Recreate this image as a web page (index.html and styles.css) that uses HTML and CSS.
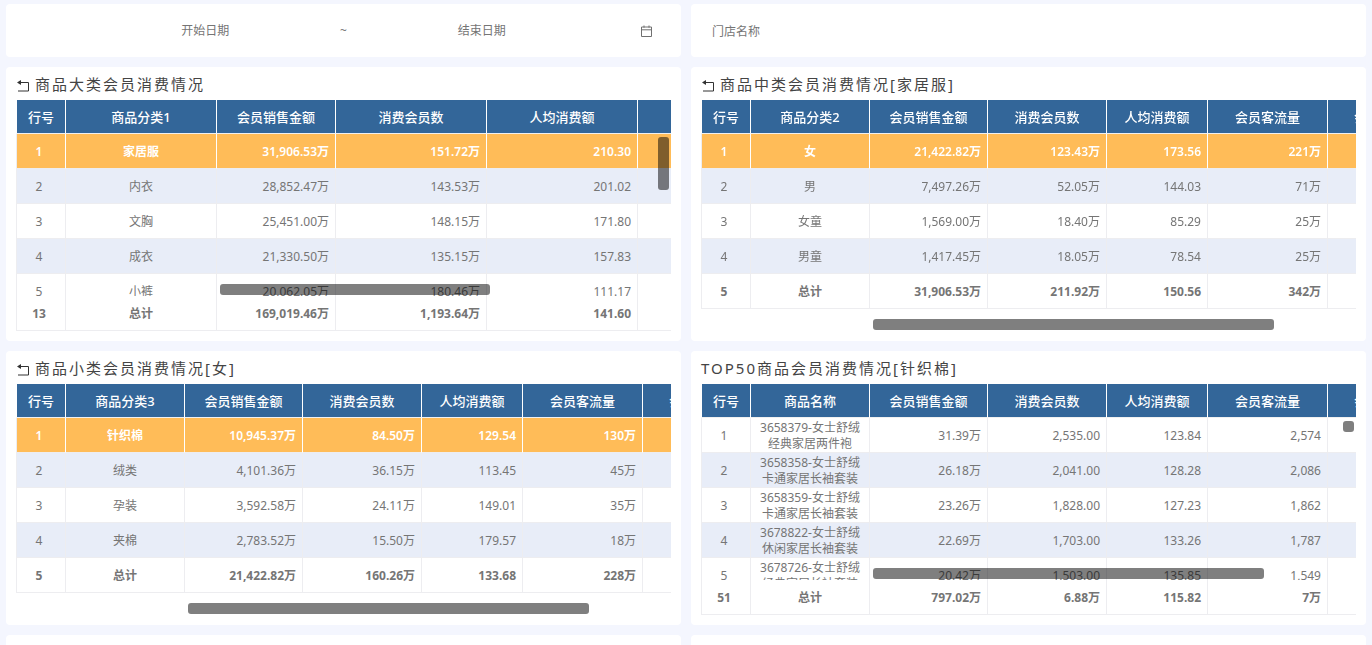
FILE: index.html
```html
<!DOCTYPE html>
<html lang="zh-CN">
<head>
<meta charset="utf-8">
<title>商品会员消费情况</title>
<link rel="stylesheet" href="styles.css">
</head>
<body>
<main class="board">
  <section class="card filter date-range">
    <input class="field field-center" type="text" placeholder="开始日期" aria-label="开始日期">
    <span class="tilde">~</span>
    <input class="field field-center" type="text" placeholder="结束日期" aria-label="结束日期">
    <svg class="calendar" viewBox="0 0 12 12" aria-hidden="true"><path d="M.5 2h10v9.500H.5zM.5 4.800h10M3 .5v2.200M8 .5v2.200"/></svg>
  </section>
  <section class="card filter store">
    <input class="field" type="text" placeholder="门店名称" aria-label="门店名称">
  </section>

  <section class="card panel">
    <h2 class="title"><button class="back" type="button" aria-label="返回"><svg viewBox="0 0 13 12"><path d="M1 2.500h10.500v8.500H1"/><path class="tip" d="M0 2.500L4 0v5z"/></svg></button>商品大类会员消费情况</h2>
    <div class="frame">
      <div class="viewport">
        <table class="grid grid-wide">
          <colgroup><col class="c-no"><col class="c-xl"><col class="c-m"><col class="c-xl"><col class="c-xl"><col class="c-xl"></colgroup>
          <thead><tr><th>行号</th><th>商品分类1</th><th>会员销售金额</th><th>消费会员数</th><th>人均消费额</th><th></th></tr></thead>
          <tbody>
            <tr class="selected"><td>1</td><td>家居服</td><td>31,906.53万</td><td>151.72万</td><td>210.30</td><td></td></tr>
            <tr><td>2</td><td>内衣</td><td>28,852.47万</td><td>143.53万</td><td>201.02</td><td></td></tr>
            <tr><td>3</td><td>文胸</td><td>25,451.00万</td><td>148.15万</td><td>171.80</td><td></td></tr>
            <tr><td>4</td><td>成衣</td><td>21,330.50万</td><td>135.15万</td><td>157.83</td><td></td></tr>
            <tr><td>5</td><td>小裤</td><td>20,062.05万</td><td>180.46万</td><td>111.17</td><td></td></tr>
          </tbody>
          <tfoot><tr><td>13</td><td>总计</td><td>169,019.46万</td><td>1,193.64万</td><td>141.60</td><td></td></tr></tfoot>
        </table>
      </div>
      <div class="thumb thumb-x over-rows thumb-first"></div>
      <div class="thumb thumb-y thumb-tall"></div>
    </div>
  </section>

  <section class="card panel">
    <h2 class="title"><button class="back" type="button" aria-label="返回"><svg viewBox="0 0 13 12"><path d="M1 2.500h10.500v8.500H1"/><path class="tip" d="M0 2.500L4 0v5z"/></svg></button>商品中类会员消费情况[家居服]</h2>
    <div class="frame">
      <div class="viewport">
        <table class="grid grid-normal">
          <colgroup><col class="c-no"><col class="c-m"><col class="c-n"><col class="c-m"><col class="c-s"><col class="c-l"><col class="c-n"></colgroup>
          <thead><tr><th>行号</th><th>商品分类2</th><th>会员销售金额</th><th>消费会员数</th><th>人均消费额</th><th>会员客流量</th><th>会员客单价</th></tr></thead>
          <tbody>
            <tr class="selected"><td>1</td><td>女</td><td>21,422.82万</td><td>123.43万</td><td>173.56</td><td>221万</td><td></td></tr>
            <tr><td>2</td><td>男</td><td>7,497.26万</td><td>52.05万</td><td>144.03</td><td>71万</td><td></td></tr>
            <tr><td>3</td><td>女童</td><td>1,569.00万</td><td>18.40万</td><td>85.29</td><td>25万</td><td></td></tr>
            <tr><td>4</td><td>男童</td><td>1,417.45万</td><td>18.05万</td><td>78.54</td><td>25万</td><td></td></tr>
          </tbody>
          <tfoot><tr><td>5</td><td>总计</td><td>31,906.53万</td><td>211.92万</td><td>150.56</td><td>342万</td><td></td></tr></tfoot>
        </table>
      </div>
      <div class="thumb thumb-x"></div>
    </div>
  </section>

  <section class="card panel">
    <h2 class="title"><button class="back" type="button" aria-label="返回"><svg viewBox="0 0 13 12"><path d="M1 2.500h10.500v8.500H1"/><path class="tip" d="M0 2.500L4 0v5z"/></svg></button>商品小类会员消费情况[女]</h2>
    <div class="frame">
      <div class="viewport">
        <table class="grid grid-normal">
          <colgroup><col class="c-no"><col class="c-m"><col class="c-n"><col class="c-m"><col class="c-s"><col class="c-l"><col class="c-n"></colgroup>
          <thead><tr><th>行号</th><th>商品分类3</th><th>会员销售金额</th><th>消费会员数</th><th>人均消费额</th><th>会员客流量</th><th>会员客单价</th></tr></thead>
          <tbody>
            <tr class="selected"><td>1</td><td>针织棉</td><td>10,945.37万</td><td>84.50万</td><td>129.54</td><td>130万</td><td></td></tr>
            <tr><td>2</td><td>绒类</td><td>4,101.36万</td><td>36.15万</td><td>113.45</td><td>45万</td><td></td></tr>
            <tr><td>3</td><td>孕装</td><td>3,592.58万</td><td>24.11万</td><td>149.01</td><td>35万</td><td></td></tr>
            <tr><td>4</td><td>夹棉</td><td>2,783.52万</td><td>15.50万</td><td>179.57</td><td>18万</td><td></td></tr>
          </tbody>
          <tfoot><tr><td>5</td><td>总计</td><td>21,422.82万</td><td>160.26万</td><td>133.68</td><td>228万</td><td></td></tr></tfoot>
        </table>
      </div>
      <div class="thumb thumb-x"></div>
    </div>
  </section>

  <section class="card panel">
    <h2 class="title">TOP50商品会员消费情况[针织棉]</h2>
    <div class="frame">
      <div class="viewport">
        <table class="grid grid-normal">
          <colgroup><col class="c-no"><col class="c-m"><col class="c-n"><col class="c-m"><col class="c-s"><col class="c-l"><col class="c-n"></colgroup>
          <thead><tr><th>行号</th><th>商品名称</th><th>会员销售金额</th><th>消费会员数</th><th>人均消费额</th><th>会员客流量</th><th>会员客单价</th></tr></thead>
          <tbody>
            <tr><td>1</td><td>3658379-女士舒绒<br>经典家居两件袍</td><td>31.39万</td><td>2,535.00</td><td>123.84</td><td>2,574</td><td></td></tr>
            <tr><td>2</td><td>3658358-女士舒绒<br>卡通家居长袖套装</td><td>26.18万</td><td>2,041.00</td><td>128.28</td><td>2,086</td><td></td></tr>
            <tr><td>3</td><td>3658359-女士舒绒<br>卡通家居长袖套装</td><td>23.26万</td><td>1,828.00</td><td>127.23</td><td>1,862</td><td></td></tr>
            <tr><td>4</td><td>3678822-女士舒绒<br>休闲家居长袖套装</td><td>22.69万</td><td>1,703.00</td><td>133.26</td><td>1,787</td><td></td></tr>
            <tr><td>5</td><td>3678726-女士舒绒<br>经典家居长袖套装</td><td>20.42万</td><td>1,503.00</td><td>135.85</td><td>1,549</td><td></td></tr>
          </tbody>
          <tfoot><tr><td>51</td><td>总计</td><td>797.02万</td><td>6.88万</td><td>115.82</td><td>7万</td><td></td></tr></tfoot>
        </table>
      </div>
      <div class="thumb thumb-x over-rows thumb-top50"></div>
      <div class="thumb thumb-y"></div>
    </div>
  </section>

  <section class="card"></section>
  <section class="card"></section>
</main>
</body>
</html>
```
FILE: styles.css
```css
* { box-sizing: border-box; }

body {
  margin: 0;
  background: #f4f6fe;
  color: #757575;
  font: 12px/16px "Noto Sans", "Noto Sans CJK SC", sans-serif;
}

.board {
  display: grid;
  grid-template-columns: repeat(2, minmax(0, 1fr));
  grid-template-rows: 53px auto auto 274px;
  gap: 10px;
  height: 100vh;
  padding: 4px 6px 0;
  overflow: hidden;
}

.card {
  background: #fff;
  border-radius: 4px;
}

/* Filters */
.filter { align-items: center; }

.date-range {
  display: grid;
  grid-template-columns: minmax(0, 1fr) 10px minmax(0, 1fr) 38px;
  padding: 0 28px 0 66px;
}

.store {
  display: flex;
  padding: 2px 21px 0;
}

.field {
  width: 100%;
  padding: 0;
  border: 0;
  outline: 0;
  background: transparent;
  color: #666;
  font: inherit;
}

.field::placeholder { color: #757575; opacity: 1; }
.field-center { text-align: center; }
.tilde { text-align: center; }

.calendar {
  justify-self: end;
  width: 12px;
  height: 12px;
  fill: none;
  stroke: #707070;
}

/* Panels */
.panel { padding: 0 10px 10px; }

.title {
  display: flex;
  align-items: center;
  gap: 5px;
  height: 33px;
  margin: 0;
  color: #444;
  font-size: 15px;
  font-weight: 400;
  line-height: 20px;
  letter-spacing: 2px;
}

.back {
  display: flex;
  padding: 4px 0 0 1px;
  border: 0;
  background: none;
  cursor: pointer;
}

.back svg {
  width: 13px;
  height: 12px;
  fill: none;
  stroke: #333;
}

.back .tip { fill: #333; stroke: none; }

.frame { position: relative; }

.viewport {
  height: 231px;
  overflow: hidden;
}

/* Tables */
.grid {
  table-layout: fixed;
  border-collapse: separate;
  border-spacing: 0;
}

.grid-wide { width: 773px; }
.grid-normal { width: 745px; }
.c-no { width: 50px; }
.c-s { width: 101px; }
.c-n { width: 118px; }
.c-m { width: 119px; }
.c-l { width: 120px; }
.c-xl { width: 151px; }

.grid th {
  height: 34px;
  padding: 0;
  border-right: 1px solid #fff;
  border-bottom: 1px solid #f0f0f0;
  background: #336699;
  color: #fff;
  font-size: 13px;
  font-weight: 500;
}

.grid td {
  height: 35px;
  padding: 1px 6px 0;
  border-right: 1px solid #ededf0;
  border-bottom: 1px solid #ededf0;
  background: #fff;
  text-align: right;
}

.grid td:nth-child(-n+2) {
  padding: 1px 0 0;
  text-align: center;
}

.grid th:first-child { border-left: 1px solid #fff; }
.grid td:first-child { padding-right: 4px; border-left: 1px solid #ededf0; }
.grid tbody tr:nth-child(even) td { background: #e8edf8; }

.grid .selected td {
  border-right-color: #fff;
  background: #ffbc58;
  color: #fff;
  font-weight: 600;
}

.grid tfoot {
  position: sticky;
  bottom: 0;
}

.grid tfoot td { font-weight: 700; }

/* Overlay scrollbar thumbs */
.thumb {
  position: absolute;
  border-radius: 3px;
  background: rgba(0, 0, 0, 0.5);
}

.thumb-x {
  left: 172px;
  bottom: 1px;
  width: 401px;
  height: 11px;
}

.thumb-y {
  top: 37px;
  right: 2px;
  width: 11px;
  height: 11px;
}

.over-rows { bottom: 36px; }
.thumb-first { left: 204px; width: 270px; }
.thumb-top50 { width: 391px; }
.thumb-tall { height: 53px; }
```
